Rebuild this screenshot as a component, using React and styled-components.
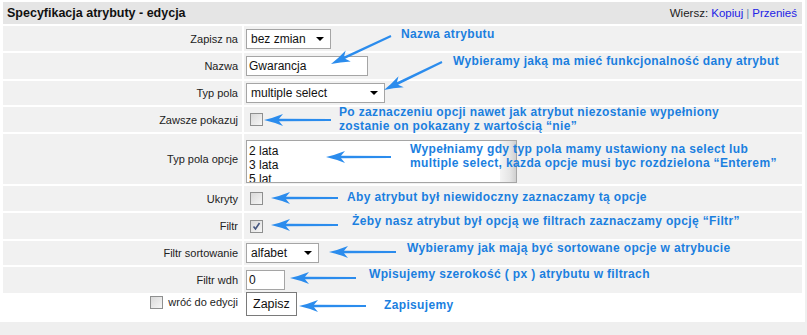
import React from "react";
import styled, { createGlobalStyle } from "styled-components";

const GlobalStyle = createGlobalStyle`
  body {
    margin: 0;
    background: #efefef;
    font-family: "Liberation Sans", Arial, sans-serif;
    font-size: 11px;
    color: #222;
  }
`;

const Page = styled.div`
  position: relative;
  width: 807px;
  height: 335px;
`;

const Panel = styled.div`
  width: 799px;
  background: #fff;
  padding: 2px 3px 1px 3px;
`;

const Header = styled.div`
  height: 22px;
  display: flex;
  align-items: center;
  justify-content: space-between;
  background: #e5e5e5;
  padding: 0 5px 0 4px;
`;

const Title = styled.span`
  font-weight: bold;
  font-size: 12.5px;
  color: #111;
`;

const RowTools = styled.span`
  font-size: 11.5px;
  color: #222;
  a {
    color: #2323e6;
    text-decoration: none;
  }
  .sep {
    color: #6a8ab0;
    margin: 0 3px;
  }
`;

const Row = styled.div`
  display: grid;
  grid-template-columns: 239px 1fr;
  column-gap: 2px;
  height: ${(p) => p.$h || 25}px;
  margin-top: 2px;
`;

const Label = styled.div`
  display: flex;
  align-items: ${(p) => (p.$plain ? "flex-start" : "center")};
  justify-content: flex-end;
  gap: 5px;
  padding-right: 4px;
  padding-top: ${(p) => (p.$plain ? 1 : 0)}px;
  background: ${(p) => (p.$plain ? "transparent" : "#f1f1f1")};
`;

const Value = styled.div`
  display: flex;
  align-items: ${(p) => (p.$plain ? "flex-start" : "center")};
  padding-left: 2px;
  background: ${(p) => (p.$plain ? "transparent" : "#f1f1f1")};
`;

const Select = styled.div`
  box-sizing: border-box;
  width: ${(p) => p.$w}px;
  height: 20px;
  display: flex;
  align-items: center;
  justify-content: space-between;
  padding: 0 6px 0 4px;
  background: #fff;
  border: 1px solid #a5a5a5;
  font-size: 12px;
  color: #111;
  &::after {
    content: "";
    border-left: 4px solid transparent;
    border-right: 4px solid transparent;
    border-top: 4px solid #000;
  }
`;

const Input = styled.div`
  box-sizing: border-box;
  width: ${(p) => p.$w}px;
  height: 20px;
  display: flex;
  align-items: center;
  padding-left: 2px;
  background: #fff;
  border: 1px solid #a5a5a5;
  font-size: 12px;
  color: #111;
`;

const Box = styled.span`
  box-sizing: border-box;
  display: inline-flex;
  align-items: center;
  justify-content: center;
  width: 13px;
  height: 13px;
  margin-left: ${(p) => (p.$inLabel ? 0 : 4)}px;
  margin-top: ${(p) => (p.$inLabel ? 0 : 0)}px;
  border: 1px solid #8e8f8f;
  background: linear-gradient(135deg, #d9d9d9, #f6f6f6);
`;

const FootText = styled.span`
  line-height: 13px;
`;

const TextArea = styled.div`
  box-sizing: border-box;
  width: 271px;
  height: 43px;
  margin-top: 4px;
  display: flex;
  background: #fff;
  border: 1px solid #a5a5a5;
  overflow: hidden;
`;

const Lines = styled.div`
  flex: 1;
  padding: 3px 2px;
  font-size: 12px;
  line-height: 14px;
  color: #111;
`;

const Scroll = styled.div`
  width: 16px;
  background: linear-gradient(90deg, #f4f4f4, #e6e6e6 60%, #cfcfcf);
`;

const Button = styled.div`
  box-sizing: border-box;
  height: 24px;
  margin-top: -3px;
  padding: 0 6px;
  display: flex;
  align-items: center;
  background: #fff;
  border: 1px solid #7a7a7a;
  font-size: 12.5px;
  color: #111;
`;

const Overlay = styled.div`
  position: absolute;
  inset: 0;
  pointer-events: none;
`;

const Note = styled.div`
  position: absolute;
  left: ${(p) => p.$x}px;
  top: ${(p) => p.$y}px;
  font-weight: bold;
  font-size: 12px;
  line-height: 14px;
  letter-spacing: 0.35px;
  color: #1b7fdf;
  white-space: nowrap;
`;

const Arrows = styled.svg`
  position: absolute;
  inset: 0;
`;

const arrows = [
  [391, 36, 331, 64],
  [442, 62, 384, 90],
  [331, 120, 264, 120],
  [391, 157, 326, 157],
  [338, 198, 271, 198],
  [338, 225, 271, 225],
  [396, 252, 329, 252],
  [356, 278, 290, 278],
  [366, 306, 299, 306],
];

const Arrow = ({ a }) => {
  const [x1, y1, x2, y2] = a;
  const dx = x1 - x2;
  const dy = y1 - y2;
  const len = Math.sqrt(dx * dx + dy * dy);
  const ang = (Math.atan2(dy, dx) * 180) / Math.PI;
  return (
    <g transform={`translate(${x2} ${y2}) rotate(${ang})`}>
      <path
        d={`M0 0 Q9 -2 19 -6 L15 -1.3 L${len} -1 L${len} 1 L15 1.3 L19 6 Q9 2 0 0 Z`}
        fill="#2b8ced"
      />
    </g>
  );
};

const Check = () => (
  <svg width="9" height="9" viewBox="0 0 9 9">
    <path d="M1.5 4.5 L3.5 7 L7.5 1" fill="none" stroke="#44557f" strokeWidth="1.6" />
  </svg>
);

export default function App() {
  return (
    <Page>
      <GlobalStyle />
      <Panel>
        <Header>
          <Title>Specyfikacja atrybuty - edycja</Title>
          <RowTools>
            Wiersz: <a>Kopiuj</a>
            <span className="sep">|</span>
            <a>Przenieś</a>
          </RowTools>
        </Header>
        <Row>
          <Label>Zapisz na</Label>
          <Value>
            <Select $w={85}>bez zmian</Select>
          </Value>
        </Row>
        <Row $h={26}>
          <Label>Nazwa</Label>
          <Value>
            <Input $w={122}>Gwarancja</Input>
          </Value>
        </Row>
        <Row $h={24}>
          <Label>Typ pola</Label>
          <Value>
            <Select $w={139}>multiple select</Select>
          </Value>
        </Row>
        <Row>
          <Label>Zawsze pokazuj</Label>
          <Value>
            <Box />
          </Value>
        </Row>
        <Row $h={50}>
          <Label>Typ pola opcje</Label>
          <Value>
            <TextArea>
              <Lines>
                2 lata
                <br />3 lata
                <br />5 lat
              </Lines>
              <Scroll />
            </TextArea>
          </Value>
        </Row>
        <Row>
          <Label>Ukryty</Label>
          <Value>
            <Box />
          </Value>
        </Row>
        <Row $h={26}>
          <Label>Filtr</Label>
          <Value>
            <Box>
              <Check />
            </Box>
          </Value>
        </Row>
        <Row $h={24}>
          <Label>Filtr sortowanie</Label>
          <Value>
            <Select $w={73}>alfabet</Select>
          </Value>
        </Row>
        <Row $h={26}>
          <Label>Filtr wdh</Label>
          <Value>
            <Input $w={39}>0</Input>
          </Value>
        </Row>
        <Row $h={26}>
          <Label $plain>
            <Box $inLabel />
            <FootText>wróć do edycji</FootText>
          </Label>
          <Value $plain>
            <Button>Zapisz</Button>
          </Value>
        </Row>
      </Panel>
      <Overlay>
        <Arrows width="807" height="335">
          {arrows.map((a, i) => (
            <Arrow key={i} a={a} />
          ))}
        </Arrows>
        <Note $x={401} $y={27}>Nazwa atrybutu</Note>
        <Note $x={453} $y={54}>Wybieramy jaką ma mieć funkcjonalność dany atrybut</Note>
        <Note $x={339} $y={105}>
          Po zaznaczeniu opcji nawet jak atrybut niezostanie wypełniony
          <br />
          zostanie on pokazany z wartością “nie”
        </Note>
        <Note $x={410} $y={142}>
          Wypełniamy gdy typ pola mamy ustawiony na select lub
          <br />
          multiple select, kazda opcje musi byc rozdzielona “Enterem”
        </Note>
        <Note $x={347} $y={190}>Aby atrybut był niewidoczny zaznaczamy tą opcje</Note>
        <Note $x={352} $y={214}>Żeby nasz atrybut był opcją we filtrach zaznaczamy opcję “Filtr”</Note>
        <Note $x={407} $y={241}>Wybieramy jak mają być sortowane opcje w atrybucie</Note>
        <Note $x={369} $y={267}>Wpisujemy szerokość ( px ) atrybutu w filtrach</Note>
        <Note $x={384} $y={298}>Zapisujemy</Note>
      </Overlay>
    </Page>
  );
}
